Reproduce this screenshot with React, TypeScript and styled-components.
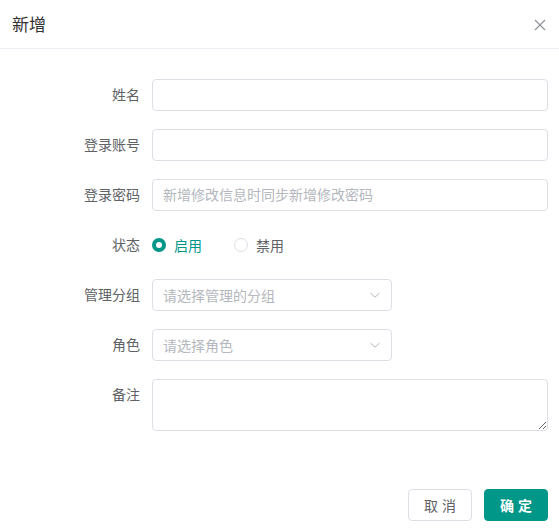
import React from "react";
import styled, { createGlobalStyle } from "styled-components";

const Global = createGlobalStyle`
  html, body { margin: 0; padding: 0; background: #fff; }
  body { font-family: "Liberation Sans", "Noto Sans CJK SC", sans-serif; font-size: 14px; color: #606266; }
  * { box-sizing: border-box; }
`;

const Dialog = styled.div`
  width: 559px;
  height: 529px;
  background: #fff;
  display: flex;
  flex-direction: column;
`;

const Header = styled.div`
  height: 49px;
  border-bottom: 1px solid #eceef3;
  display: flex;
  align-items: center;
  justify-content: space-between;
  padding: 0 12px 2px 12px;
`;

const Title = styled.div`
  font-size: 17px;
  color: #333;
`;

const CloseBtn = styled.button`
  border: none;
  background: none;
  padding: 0;
  width: 14px;
  height: 14px;
  display: flex;
  align-items: center;
  justify-content: center;
  cursor: pointer;
  margin-right: 0;
  margin-top: 3px;
`;

const Form = styled.div`
  display: flex;
  flex-direction: column;
  gap: 18px;
  padding: 30px 11px 0 0;
`;

const Row = styled.div<{ $top?: boolean }>`
  display: flex;
  align-items: ${(p) => (p.$top ? "flex-start" : "center")};
  min-height: 32px;
`;

const Label = styled.label`
  width: 140px;
  flex: none;
  text-align: right;
  margin-right: 12px;
  color: #606266;
  font-size: 14px;
  line-height: 32px;
`;

const Input = styled.input`
  flex: 1;
  height: 32px;
  border: 1px solid #dcdfe6;
  border-radius: 4px;
  padding: 0 10px;
  font-size: 14px;
  font-family: inherit;
  color: #606266;
  outline: none;
  &::placeholder { color: #b4b7bd; }
`;

const SelectBox = styled.div`
  width: 240px;
  height: 32px;
  border: 1px solid #dcdfe6;
  border-radius: 4px;
  padding: 0 10px;
  display: flex;
  align-items: center;
  justify-content: space-between;
  color: #b4b7bd;
  font-size: 14px;
`;

const TextArea = styled.textarea`
  flex: 1;
  height: 52px;
  border: 1px solid #dcdfe6;
  border-radius: 4px;
  padding: 5px 10px;
  font-size: 14px;
  font-family: inherit;
  resize: vertical;
  outline: none;
  display: block;
`;

const RadioGroup = styled.div`
  display: flex;
  align-items: center;
  gap: 32px;
`;

const RadioItem = styled.label<{ $checked?: boolean }>`
  display: flex;
  align-items: center;
  gap: 8px;
  color: ${(p) => (p.$checked ? "#009688" : "#606266")};
  font-size: 14px;
  cursor: pointer;
`;

const RadioDot = styled.span<{ $checked?: boolean }>`
  width: 14px;
  height: 14px;
  border-radius: 50%;
  border: ${(p) => (p.$checked ? "4px solid #009688" : "1px solid #dcdfe6")};
  background: #fff;
  flex: none;
`;

const Footer = styled.div`
  margin-top: auto;
  display: flex;
  justify-content: flex-end;
  gap: 12px;
  padding: 0 11px 8px 0;
`;

const Button = styled.button<{ $primary?: boolean }>`
  width: 64px;
  height: 32px;
  border-radius: 4px;
  font-size: 14px;
  font-family: inherit;
  letter-spacing: 4px;
  padding: 0 0 0 4px;
  cursor: pointer;
  border: 1px solid ${(p) => (p.$primary ? "#009688" : "#dcdfe6")};
  background: ${(p) => (p.$primary ? "#009688" : "#fff")};
  color: ${(p) => (p.$primary ? "#fff" : "#606266")};
  font-weight: ${(p) => (p.$primary ? 700 : 400)};
`;

const Chevron = () => (
  <svg width="12" height="12" viewBox="0 0 12 12" fill="none">
    <path d="M1.5 4 L6 8.2 L10.5 4" stroke="#b4b7bd" strokeWidth="1" />
  </svg>
);

export default function App() {
  return (
    <>
      <Global />
      <Dialog>
        <Header>
          <Title>新增</Title>
          <CloseBtn aria-label="close">
            <svg width="12" height="12" viewBox="0 0 12 12">
              <path d="M1 1 L11 11 M11 1 L1 11" stroke="#909399" strokeWidth="1.2" />
            </svg>
          </CloseBtn>
        </Header>
        <Form>
          <Row>
            <Label>姓名</Label>
            <Input />
          </Row>
          <Row>
            <Label>登录账号</Label>
            <Input />
          </Row>
          <Row>
            <Label>登录密码</Label>
            <Input placeholder="新增修改信息时同步新增修改密码" />
          </Row>
          <Row>
            <Label>状态</Label>
            <RadioGroup>
              <RadioItem $checked>
                <RadioDot $checked />
                启用
              </RadioItem>
              <RadioItem>
                <RadioDot />
                禁用
              </RadioItem>
            </RadioGroup>
          </Row>
          <Row>
            <Label>管理分组</Label>
            <SelectBox>
              <span>请选择管理的分组</span>
              <Chevron />
            </SelectBox>
          </Row>
          <Row>
            <Label>角色</Label>
            <SelectBox>
              <span>请选择角色</span>
              <Chevron />
            </SelectBox>
          </Row>
          <Row $top>
            <Label>备注</Label>
            <TextArea />
          </Row>
        </Form>
        <Footer>
          <Button>取消</Button>
          <Button $primary>确定</Button>
        </Footer>
      </Dialog>
    </>
  );
}
